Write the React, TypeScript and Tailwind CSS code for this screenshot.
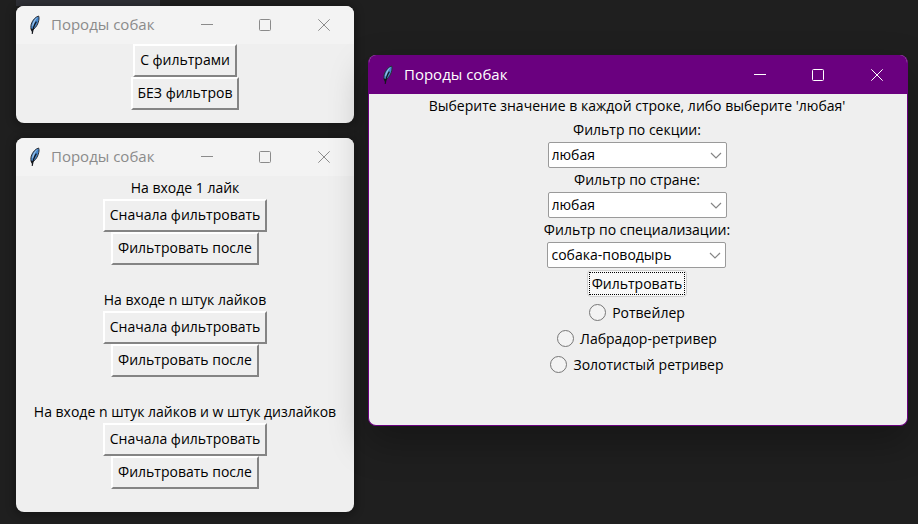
import type { ReactNode } from "react";

function Feather() {
  return (
    <svg width="14" height="20" viewBox="0 0 14 20" aria-hidden="true" className="shrink-0">
      <path d="M10.6 1C7.4 2 4.6 5 3.3 9 2.6 11.6 2.7 13.6 3.6 15.4 6.8 14 9 11 10.2 7.6 11 5 11.4 2.8 10.6 1Z" fill="#4486cc" stroke="#2c3038" strokeWidth="1" />
      <path d="M9.8 2C7 3.6 4.9 6.8 4.2 10.6L5 11.8C5.6 8.4 7.3 5 9.8 2Z" fill="#a5c9ea" />
      <path d="M8.4 6.6C6.4 9.4 5 13 4.2 18.8" fill="none" stroke="#14161c" strokeWidth="1.2" />
      <path d="M2.6 13.6 5.6 14.2 4 17.2Z" fill="#14161c" />
    </svg>
  );
}

type WindowProps = { active?: boolean; className: string; children: ReactNode };

function AppWindow({ active = false, className, children }: WindowProps) {
  const frame = active
    ? "border border-t-0 border-[#6a007f] bg-[#efefef] shadow-[0_16px_36px_2px_rgba(0,0,0,0.28)] relative z-10"
    : "bg-[#efefef] shadow-[0_1px_8px_2px_rgba(0,0,0,0.3)]";
  const bar = active ? "h-[39px] bg-[#6a007f] text-white" : "h-[38px] bg-[#f3f3f3] text-[#8b8b8b]";
  return (
    <section className={`flex flex-col overflow-hidden rounded-lg ${frame} ${className}`}>
      <header className={`flex shrink-0 items-center pl-3 ${bar}`}>
        <Feather />
        <h1 className="ml-[9px] grow pb-0.5 text-[15px] leading-5">Породы собак</h1>
        <div className="flex h-full">
          <button aria-label="Свернуть" className="flex w-[58px] items-center justify-center">
            <svg width="12" height="12" viewBox="0 0 12 12" stroke="currentColor"><path d="M0 5.5h12" /></svg>
          </button>
          <button aria-label="Развернуть" className="flex w-[58px] items-center justify-center">
            <svg width="12" height="12" viewBox="0 0 12 12" fill="none" stroke="currentColor"><rect x=".5" y=".5" width="11" height="11" rx="1" /></svg>
          </button>
          <button aria-label="Закрыть" className="flex w-[60px] items-center justify-center">
            <svg width="12" height="12" viewBox="0 0 12 12" stroke="currentColor"><path d="M.3.3l11.4 11.4M11.7.3L.3 11.7" /></svg>
          </button>
        </div>
      </header>
      {children}
    </section>
  );
}

function ClassicButton({ children }: { children: ReactNode }) {
  return (
    <button className="h-[33px] border-2 border-t-white border-l-white border-r-[#848484] border-b-[#848484] px-[5px] pb-px leading-5">
      {children}
    </button>
  );
}

const groups = ["На входе 1 лайк", "На входе n штук лайков", "На входе n штук лайков и w штук дизлайков"];

const filters = [
  { id: "section", label: "Фильтр по секции:", value: "любая" },
  { id: "country", label: "Фильтр по стране:", value: "любая" },
  { id: "spec", label: "Фильтр по специализации:", value: "собака-поводырь" },
];

const breeds = ["Ротвейлер", "Лабрадор-ретривер", "Золотистый ретривер"];

export default function App() {
  return (
    <main className="min-h-screen bg-[#1f1f1f] font-['Open_Sans','Noto_Sans',sans-serif] text-[14px] text-black">
      <div className="ml-4 h-[6px] w-36 bg-[#2f3036]" />
      <div className="flex items-start gap-[14px] pr-[10px] pl-4">
        <div className="flex w-[338px] shrink-0 flex-col gap-[15px]">
          <AppWindow className="pb-[13px]">
            <div className="flex flex-col items-center">
              <ClassicButton>С фильтрами</ClassicButton>
              <ClassicButton>БЕЗ фильтров</ClassicButton>
            </div>
          </AppWindow>
          <AppWindow className="pb-[23px]">
            <div className="flex flex-col gap-6 pt-px">
              {groups.map((title) => (
                <div key={title} className="flex flex-col items-center">
                  <p className="leading-[22px] whitespace-nowrap">{title}</p>
                  <ClassicButton>Сначала фильтровать</ClassicButton>
                  <ClassicButton>Фильтровать после</ClassicButton>
                </div>
              ))}
            </div>
          </AppWindow>
        </div>

        <AppWindow active className="mt-[49px] grow pb-12">
          <form className="flex flex-col items-center pr-0.5" onSubmit={(e) => e.preventDefault()}>
            <p className="leading-6">Выберите значение в каждой строке, либо выберите 'любая'</p>
            {filters.map((f) => (
              <div key={f.id} className="flex flex-col items-center">
                <label htmlFor={f.id} className="leading-6">{f.label}</label>
                <div className="grid h-[26px] w-[179px] items-center">
                  <select id={f.id} defaultValue={f.value} className="col-start-1 row-start-1 h-full w-full appearance-none rounded-xs border border-[#9a9a9a] bg-white pl-[3px] leading-5">
                    <option>{f.value}</option>
                  </select>
                  <svg width="12" height="7" viewBox="0 0 12 7" fill="none" stroke="#858585" className="pointer-events-none col-start-1 row-start-1 mr-[5px] justify-self-end">
                    <path d="M1 1l5 5 5-5" strokeWidth="1.2" />
                  </svg>
                </div>
              </div>
            ))}
            <button className="mt-0.5 h-[27px] rounded border border-[#d0d0d0] bg-[#f8f8f8] p-px">
              <span className="flex h-full items-center border border-dotted border-black px-0.5">Фильтровать</span>
            </button>
            <div className="mt-0.5 flex flex-col items-center">
              {breeds.map((b) => (
                <label key={b} className="flex h-[26px] items-center gap-1.5">
                  <input type="radio" name="breed" className="size-[17px] appearance-none rounded-full border border-[#777] bg-[#f3f3f3] checked:border-4" />
                  {b}
                </label>
              ))}
            </div>
          </form>
        </AppWindow>
      </div>
    </main>
  );
}
